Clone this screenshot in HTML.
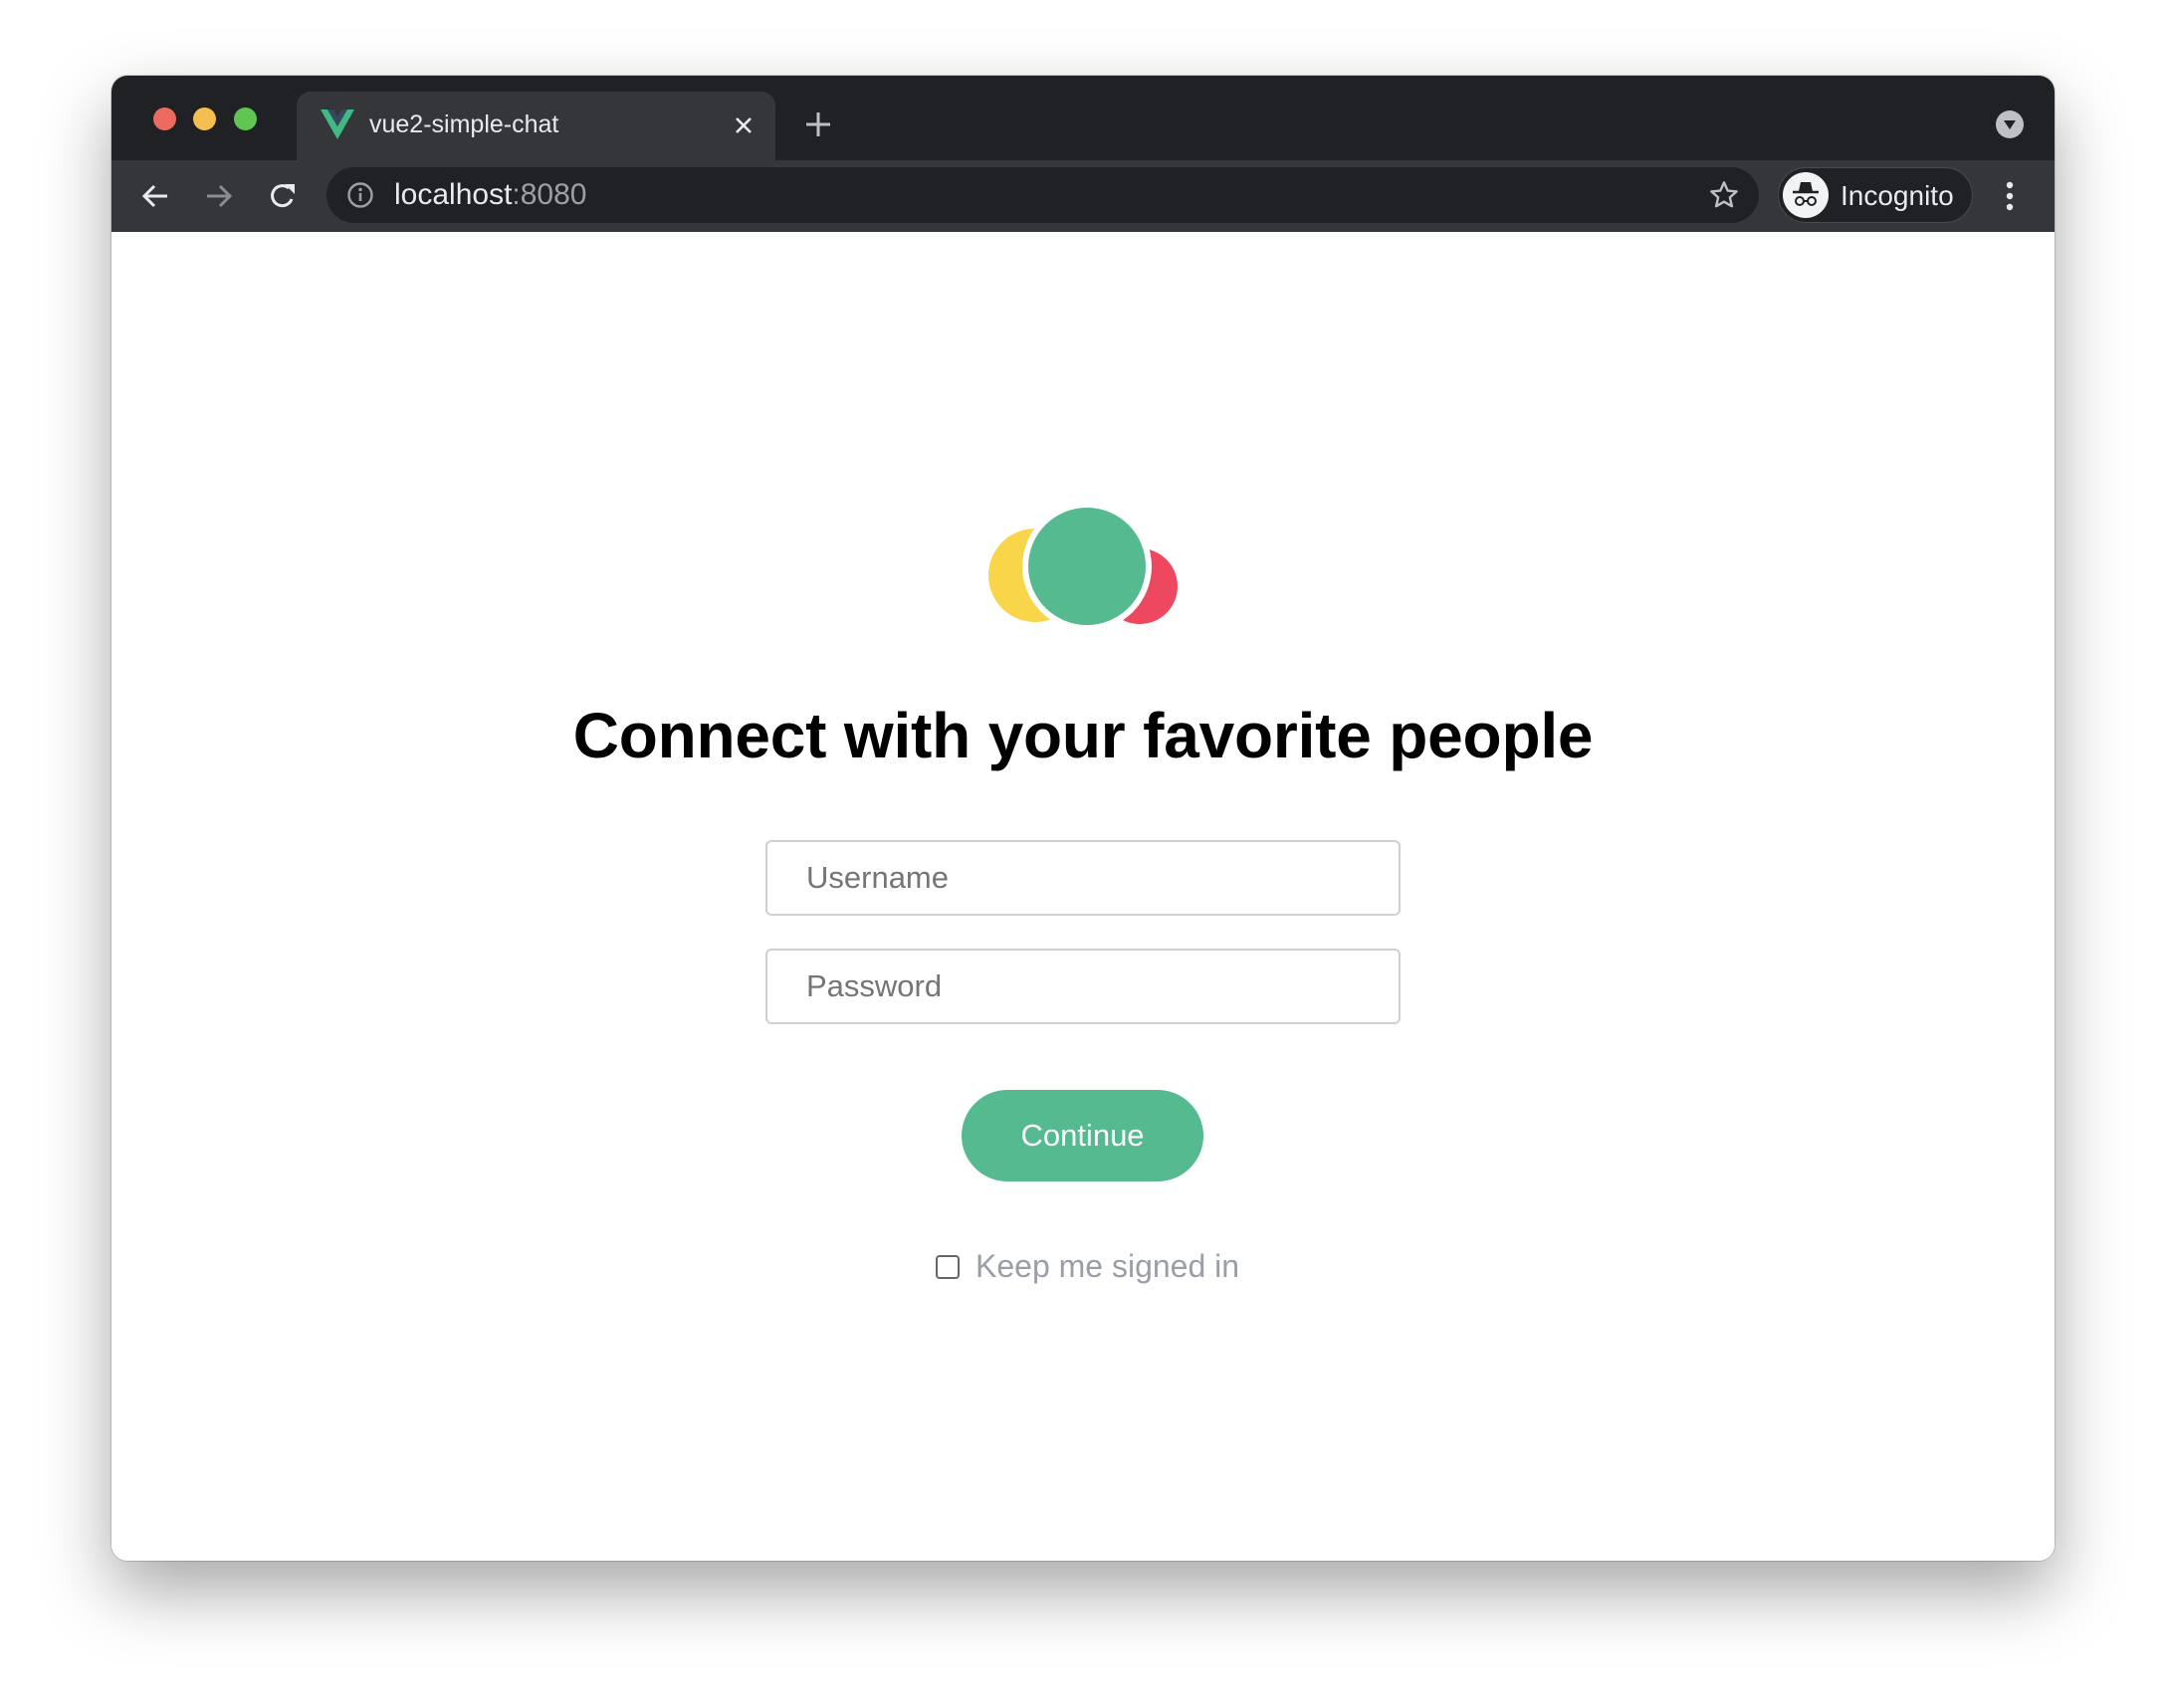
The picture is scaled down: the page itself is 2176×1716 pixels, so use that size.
<!DOCTYPE html>
<html><head><meta charset="utf-8"><style>
*{box-sizing:border-box;margin:0;padding:0}
body{width:2176px;height:1716px;background:#fff;position:relative;overflow:hidden;font-family:"Liberation Sans",Arial,sans-serif}
.win{position:absolute;left:112px;top:76px;width:1952px;height:1492px;border-radius:16px;overflow:hidden;background:#fff;box-shadow:0 30px 70px rgba(0,0,0,.35),0 0 0 1px rgba(0,0,0,.15)}
.tabbar{position:absolute;left:0;top:0;width:100%;height:85px;background:#202124}
.tl{position:absolute;top:32px;width:23px;height:23px;border-radius:50%}
.tab{position:absolute;left:186px;top:16px;width:481px;height:75px;background:#35363a;border-radius:14px 14px 0 0}
.toolbar{position:absolute;left:0;top:85px;width:100%;height:72px;background:#35363a}
.url{position:absolute;left:216px;top:7px;width:1439px;height:56px;border-radius:28px;background:#202124}
.abs{position:absolute}
.content{position:absolute;left:0;top:157px;width:100%;bottom:0;background:#fff}
.inp{position:absolute;left:657px;width:638px;height:76px;border:2px solid #cfd0d4;border-radius:6px;font-size:31px;color:#757575;padding-left:39px;line-height:72px}
</style></head><body>
<div class="win">
 <div class="tabbar">
  <div class="tl" style="left:42px;background:#ed6a5e"></div>
  <div class="tl" style="left:82px;background:#f5be4f"></div>
  <div class="tl" style="left:123px;background:#61c554"></div>
  <div class="tab">
   <svg class="abs" style="left:24px;top:18px" width="34" height="30" viewBox="0 0 34 30"><path d="M0 0h7l10 17L27 0h7L17 30z" fill="#42b883"/><path d="M7 0h6l4 7 4-7h6L17 17z" fill="#35495e"/></svg>
   <div class="abs" style="left:73px;top:19px;font-size:25px;color:#e8eaed">vue2-simple-chat</div>
   <svg class="abs" style="left:440px;top:25px" width="18" height="18"><path d="M2 2L16 16M16 2L2 16" stroke="#e8eaed" stroke-width="2.6"/></svg>
  </div>
  <svg class="abs" style="left:696px;top:35px" width="28" height="28"><path d="M14 2V26M2 14H26" stroke="#bdc1c6" stroke-width="3"/></svg>
  <svg class="abs" style="left:1893px;top:35px" width="28" height="28"><circle cx="14" cy="14" r="14" fill="#bdc1c6"/><path d="M8 10H20L14 19z" fill="#202124"/></svg>
 </div>
 <div class="toolbar">
  <svg class="abs" style="left:30px;top:22px" width="28" height="28"><path d="M26 14H3M13 4L3 14L13 24" stroke="#e8eaed" stroke-width="3" fill="none"/></svg>
  <svg class="abs" style="left:94px;top:22px" width="28" height="28"><path d="M2 14H25M15 4L25 14L15 24" stroke="#8a8c90" stroke-width="3" fill="none"/></svg>
  <svg class="abs" style="left:157px;top:21px" width="30" height="30"><path d="M24 18A10 10 0 1 1 21 7" stroke="#e8eaed" stroke-width="3" fill="none"/><path d="M17 3H27V13z" fill="#e8eaed"/></svg>
  <div class="url">
   <svg class="abs" style="left:20px;top:14px" width="28" height="28"><circle cx="14" cy="14" r="11.5" stroke="#9aa0a6" stroke-width="2.4" fill="none"/><path d="M14 12V20" stroke="#9aa0a6" stroke-width="2.6"/><circle cx="14" cy="8.5" r="1.7" fill="#9aa0a6"/></svg>
   <div class="abs" style="left:68px;top:11px;font-size:30px;color:#e8eaed">localhost<span style="color:#9aa0a6">:8080</span></div>
   <svg class="abs" style="left:1388px;top:12px" width="32" height="32" viewBox="0 0 24 24"><path d="M12 2.5l2.8 6.2 6.7.6-5.1 4.5 1.5 6.6L12 17l-5.9 3.4 1.5-6.6-5.1-4.5 6.7-.6z" fill="none" stroke="#bdc1c6" stroke-width="1.8" stroke-linejoin="round"/></svg>
  </div>
  <div class="abs" style="left:1674px;top:7px;width:196px;height:56px;border-radius:28px;background:#202124;border:1px solid #4a4b4f">
   <svg class="abs" style="left:4px;top:4px" width="46" height="46" viewBox="0 0 46 46"><circle cx="23" cy="23" r="23" fill="#f1f3f4"/><path d="M16 19L18 10H28L30 19z" fill="#202124"/><path d="M10 20H36" stroke="#202124" stroke-width="2.5"/><circle cx="17" cy="29" r="4" stroke="#202124" stroke-width="2" fill="none"/><circle cx="29" cy="29" r="4" stroke="#202124" stroke-width="2" fill="none"/><path d="M21 29H25" stroke="#202124" stroke-width="2"/></svg>
   <div class="abs" style="left:62px;top:12px;font-size:28px;color:#e8eaed">Incognito</div>
  </div>
  <svg class="abs" style="left:1900px;top:20px" width="14" height="32"><circle cx="7" cy="5" r="3.2" fill="#e8eaed"/><circle cx="7" cy="16" r="3.2" fill="#e8eaed"/><circle cx="7" cy="27" r="3.2" fill="#e8eaed"/></svg>
 </div>
 <div class="content">
  <svg class="abs" style="left:860px;top:264px" width="230" height="140" viewBox="860 340 230 140">
   <circle cx="928" cy="421" r="47" fill="#f9d549"/>
   <circle cx="1033" cy="432" r="38" fill="#ee4860"/>
   <circle cx="980" cy="412" r="65" fill="#fff"/>
   <circle cx="980" cy="412" r="59" fill="#55ba8f"/>
  </svg>
  <div class="abs" style="left:0;width:100%;top:469px;text-align:center;font-size:64px;font-weight:bold;color:#000;letter-spacing:-0.2px">Connect with your favorite people</div>
  <div class="inp" style="top:611px">Username</div>
  <div class="inp" style="top:720px">Password</div>
  <div class="abs" style="left:854px;top:862px;width:243px;height:92px;border-radius:46px;background:#55ba8f;color:#fff;font-size:31px;text-align:center;line-height:92px">Continue</div>
  <div class="abs" style="left:828px;top:1028px;width:24px;height:24px;border:2px solid #666;border-radius:4px"></div>
  <div class="abs" style="left:868px;top:1021px;font-size:32px;color:#9a9ea6">Keep me signed in</div>
 </div>
</div>
</body></html>
